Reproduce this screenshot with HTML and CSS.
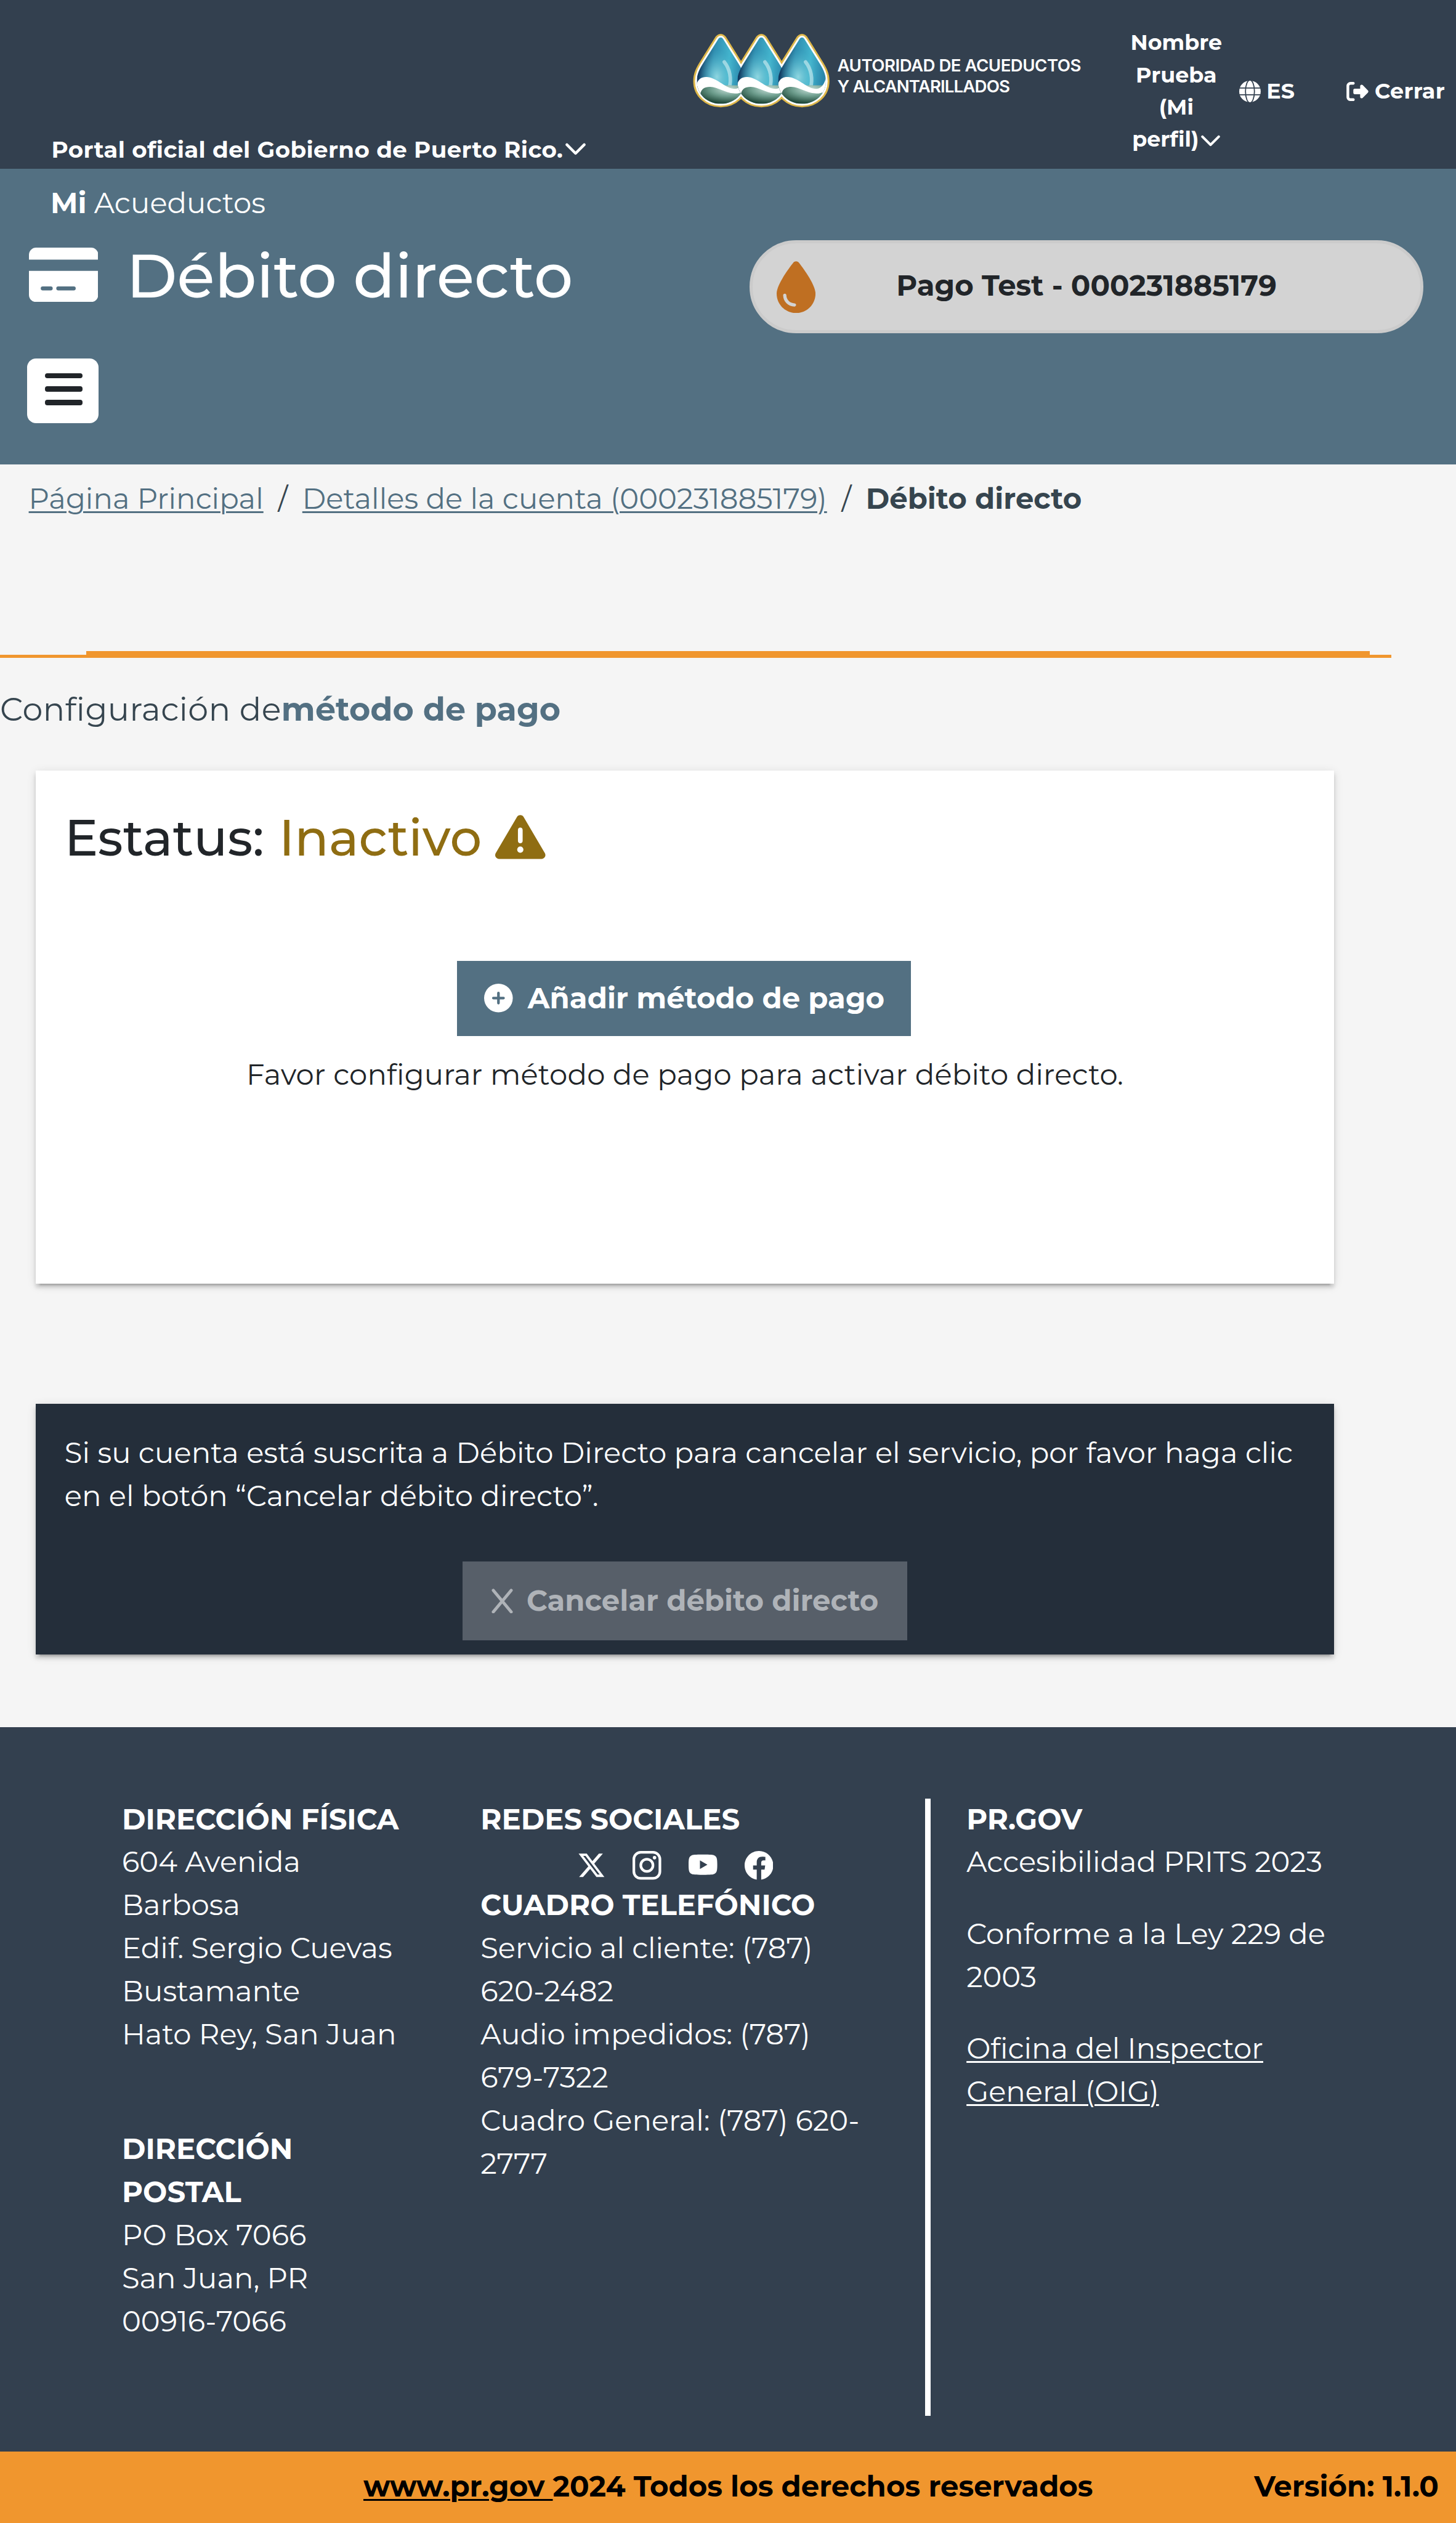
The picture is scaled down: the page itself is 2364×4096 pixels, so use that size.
FILE: index.html
```html
<!DOCTYPE html>
<html lang="es">
<head>
<meta charset="utf-8">
<title>Débito directo</title>
<link rel="stylesheet" href="styles.css">
</head>
<body>
<header class="topbar">
  <div class="portal"><span>Portal oficial del Gobierno de Puerto Rico.</span><svg class="chev" viewBox="0 0 34 21"><path d="M2.500 3 17 17.500 31.500 3"/></svg></div>
  <div class="brand">
    <svg class="drops" viewBox="0 0 227 123">
      <defs>
        <path id="drop" d="M0 6c2 0 3.500 1.500 5 4L28 47C35 58 40 67 40 79C40 101 22 117 0 117S-40 101-40 79C-40 67-35 58-28 47L-5 10C-3.500 7.500-2 6 0 6Z"/>
        <clipPath id="dropClip"><use href="#drop"/></clipPath>
        <linearGradient id="blue" x1="0" x2="1" y1=".1" y2=".25"><stop offset=".1" stop-color="#123a60"/><stop offset=".38" stop-color="#2f8db0"/><stop offset=".7" stop-color="#43b4cd"/><stop offset="1" stop-color="#2a86ab"/></linearGradient>
        <radialGradient id="glow" cx=".42" cy=".6" r=".38"><stop offset="0" stop-color="#8fd6e0"/><stop offset="1" stop-color="#4fbcd0" stop-opacity="0"/></radialGradient>
        <radialGradient id="green" cx=".66" cy=".2" r=".75"><stop offset="0" stop-color="#c5dfd8"/><stop offset=".5" stop-color="#6c9c8c"/><stop offset="1" stop-color="#1d4536"/></radialGradient>
        <g id="face" clip-path="url(#dropClip)">
          <rect x="-40" y="0" width="80" height="120" fill="url(#blue)"/>
          <rect x="-40" y="0" width="80" height="120" fill="url(#glow)"/>
          <path d="M6 47C15 58 19 75 14 92" fill="none" stroke="#d4eff2" stroke-opacity=".6" stroke-width="6" stroke-linecap="round"/>
          <path d="M-40 86H40V118H-40Z" fill="url(#green)"/>
          <path fill="#fff" d="M-41 90C-40 74-30 71-21 72.500C-4 75 8 92 24 92C33 92 38 82 40 74L41 110L34 98C30 100 26 100 22 99.500C8 99-4 89-18 88.600C-27 88.600-33 92-34 101L-41 100Z"/>
        </g>
      </defs>
      <g fill="#dfb84a" stroke="#dfb84a" stroke-width="12"><use href="#drop" x="45.500"/><use href="#drop" x="113.500"/><use href="#drop" x="181.500"/></g>
      <g fill="#fff" stroke="#fff" stroke-width="6"><use href="#drop" x="45.500"/><use href="#drop" x="113.500"/><use href="#drop" x="181.500"/></g>
      <use href="#face" x="45.500"/><use href="#face" x="113.500"/><use href="#face" x="181.500"/>
    </svg>
    <div class="brand-name">AUTORIDAD DE ACUEDUCTOS<br><span class="brand-sub">Y ALCANTARILLADOS</span></div>
  </div>
  <nav class="usernav">
    <div class="profile">Nombre<br>Prueba<br>(Mi<br>perfil)<svg class="chev" viewBox="0 0 34 21"><path d="M2.500 3 17 17.500 31.500 3"/></svg></div>
    <div class="lang"><svg class="globe" viewBox="0 0 36 36"><circle cx="18" cy="18" r="18" fill="#fff"/><g fill="none" stroke="#33404f" stroke-width="1.800"><ellipse cx="18" cy="18" rx="7.500" ry="19"/><path d="M0 12.200H36M0 23.500H36"/></g></svg>ES</div>
    <div class="logout"><svg viewBox="0 32 512 448"><path fill="#fff" d="M377.900 105.900L500.700 228.700c7.200 7.200 11.300 17.100 11.300 27.300s-4.100 20.100-11.300 27.300L377.900 406.100c-6.400 6.400-15 9.900-24 9.900c-18.700 0-33.900-15.200-33.900-33.900l0-62.100-128 0c-17.700 0-32-14.300-32-32l0-64c0-17.700 14.300-32 32-32l128 0 0-62.100c0-18.700 15.200-33.900 33.900-33.900c9 0 17.600 3.600 24 9.900zM160 96L96 96c-17.700 0-32 14.300-32 32l0 256c0 17.700 14.300 32 32 32l64 0c17.700 0 32 14.300 32 32s-14.300 32-32 32l-64 0c-53 0-96-43-96-96L0 128C0 75 43 32 96 32l64 0c17.700 0 32 14.300 32 32s-14.300 32-32 32z"/></svg>Cerrar</div>
  </nav>
</header>

<section class="band">
  <div class="band-left">
    <div class="app"><b>Mi</b> Acueductos</div>
    <div class="title-row">
      <svg class="card-icon" viewBox="0 0 116 91"><path fill="#fff" d="M12 0H104A12 12 0 0 1 116 12V20H0V12A12 12 0 0 1 12 0Z"/><path fill="#fff" fill-rule="evenodd" d="M0 39H116V79A12 12 0 0 1 104 91H12A12 12 0 0 1 0 79ZM23 65a3 3 0 0 0 0 6.500H36.500a3 3 0 0 0 0-6.500ZM49 65a3 3 0 0 0 0 6.500H75a3 3 0 0 0 0-6.500Z"/></svg>
      <h1>Débito directo</h1>
    </div>
    <button class="menu"><i></i><i></i><i></i></button>
  </div>
  <div class="account">
    <svg viewBox="0 0 384 512"><path fill="#bf6f22" d="M192 512C86 512 0 426 0 320C0 228.800 130.200 57.700 166.600 11.700C172.600 4.200 181.500 0 191.100 0h1.800c9.600 0 18.500 4.200 24.500 11.700C253.800 57.700 384 228.800 384 320c0 106-86 192-192 192zM96 336c0-8.800-7.200-16-16-16s-16 7.200-16 16c0 61.900 50.100 112 112 112c8.800 0 16-7.200 16-16s-7.200-16-16-16c-44.200 0-80-35.800-80-80z"/></svg>
    <span>Pago Test - 000231885179</span>
  </div>
</section>

<main>
  <nav class="crumbs"><a>Página Principal</a><span class="slash">/</span><a>Detalles de la cuenta (000231885179)</a><span class="slash">/</span><b>Débito directo</b></nav>
  <div class="rule"><div></div></div>
  <h2 class="config"><span>Configuración de</span><b>método de pago</b></h2>

  <section class="card status">
    <h3><span>Estatus:</span><span class="inactive">Inactivo</span><svg viewBox="0 32 512 448"><path fill="#8f6d12" d="M256 32c14.200 0 27.300 7.500 34.500 19.800l216 368c7.300 12.400 7.300 27.700 .2 40.100S486.300 480 472 480H40c-14.300 0-27.600-7.700-34.700-20.100s-7-27.800 .2-40.100l216-368C228.700 39.500 241.800 32 256 32zm0 128c-13.300 0-24 10.700-24 24V296c0 13.300 10.700 24 24 24s24-10.700 24-24V184c0-13.300-10.700-24-24-24zm32 224a32 32 0 1 0 -64 0 32 32 0 1 0 64 0z"/></svg></h3>
    <button class="btn add"><svg viewBox="0 0 48 48"><circle cx="24" cy="24" r="24" fill="#fff"/><path d="M24 15.500V32.500M15.500 24H32.500" stroke="#537082" stroke-width="4.400" stroke-linecap="round"/></svg><span>Añadir método de pago</span></button>
    <p class="hint">Favor configurar método de pago para activar débito directo.</p>
  </section>

  <section class="card cancel">
    <p>Si su cuenta está suscrita a Débito Directo para cancelar el servicio, por favor haga clic<br>en el botón “Cancelar débito directo”.</p>
    <button class="btn off"><svg viewBox="0 0 36 42"><path d="M3 3 33 39M33 3 3 39" stroke="#afb3b8" stroke-width="5" stroke-linecap="round"/></svg><span>Cancelar débito directo</span></button>
  </section>
</main>

<footer>
  <div class="col col-a">
    <b>DIRECCIÓN FÍSICA</b>
    <span>604 Avenida</span>
    <span>Barbosa</span>
    <span>Edif. Sergio Cuevas</span>
    <span>Bustamante</span>
    <span>Hato Rey, San Juan</span>
    <b class="postal">DIRECCIÓN</b>
    <b>POSTAL</b>
    <span>PO Box 7066</span>
    <span>San Juan, PR</span>
    <span>00916-7066</span>
  </div>
  <div class="col col-b">
    <b>REDES SOCIALES</b>
    <div class="social">
      <svg viewBox="0 0 512 512"><path fill="#fff" d="M389.200 48h70.600L305.600 224.200 487 464H345L233.700 318.600 106.500 464H35.800L200.700 275.500 26.800 48H172.400L272.900 180.900 389.200 48zM364.400 421.800h39.100L151.100 88h-42L364.400 421.800z"/></svg>
      <svg viewBox="0 0 48 48"><g fill="none" stroke="#fff" stroke-width="4.400"><rect x="2.200" y="2.200" width="43.600" height="43.600" rx="11.500"/><circle cx="24" cy="24" r="10.200"/></g><circle cx="36.800" cy="11.200" r="2.900" fill="#fff"/></svg>
      <svg viewBox="0 0 48 48"><path fill="#fff" fill-rule="evenodd" d="M24 6C37 6 41 6.500 43 7.500C47 9.500 48 12 48 23S47 36.500 43 38.500C41 39.500 37 40 24 40S7 39.500 5 38.500C1 36.500 0 34 0 23S1 9.500 5 7.500C7 6.500 11 6 24 6ZM19 15.800V30.200L31.500 23Z"/></svg>
      <svg viewBox="0 0 16 16"><path fill="#fff" d="M16 8.049c0-4.446-3.582-8.050-8-8.050C3.580 0-.002 3.603-.002 8.050c0 4.017 2.926 7.347 6.750 7.951v-5.625h-2.030V8.050H6.750V6.275c0-2.017 1.195-3.131 3.022-3.131.876 0 1.791.157 1.791.157v1.980h-1.009c-.993 0-1.303.621-1.303 1.258v1.510h2.218l-.354 2.326H9.250V16c3.824-.604 6.750-3.934 6.750-7.951"/></svg>
    </div>
    <b>CUADRO TELEFÓNICO</b>
    <span>Servicio al cliente: (787)</span>
    <span>620-2482</span>
    <span>Audio impedidos: (787)</span>
    <span>679-7322</span>
    <span>Cuadro General: (787) 620-</span>
    <span>2777</span>
  </div>
  <div class="divider"></div>
  <div class="col">
    <b>PR.GOV</b>
    <span>Accesibilidad PRITS 2023</span>
    <span class="gap">Conforme a la Ley 229 de</span>
    <span>2003</span>
    <a class="gap">Oficina del Inspector</a>
    <a>General (OIG)</a>
  </div>
</footer>
<div class="legal"><a>www.pr.gov&nbsp;</a><span>2024 Todos los derechos reservados</span><span class="version">Versión: 1.1.0</span></div>
</body>
</html>
```
FILE: styles.css
```css
/* 1rem is 10 layout units; the page is 243.6rem wide */
html { font-size: 9.7044px; }
* { box-sizing: border-box; }
body {
  margin: 0;
  background: #f5f5f5;
  color: #212529;
  font-family: Montserrat, Inter, sans-serif;
  font-size: 4.8rem;
  font-variant-ligatures: none;
  line-height: 7.2rem;
  white-space: nowrap;
  height: 4096px;
  overflow: hidden;
  display: flex;
  flex-direction: column;
}
svg { display: block; flex: none; }
h1, h2, h3, p { margin: 0; font-weight: 400; }
button { font: inherit; border: 0; padding: 0; margin: 0; display: flex; }
b { font-weight: 700; }

.topbar { height: 28.2rem; background: #33404f; color: #fff; display: flex; flex: none; font-weight: 700; font-size: 3.6rem; line-height: 5.4rem; }
.portal { width: 116rem; padding: 22.4rem 0 0 8.6rem; display: flex; font-size: 3.84rem; letter-spacing: .0098em; }
.chev { width: 3.4rem; height: 2.1rem; fill: none; stroke: #fff; stroke-width: 4.5; stroke-linecap: round; stroke-linejoin: round; margin: 1.5rem 0 0 .4rem; }
.brand { display: flex; padding-top: 5.7rem; width: 71rem; flex: none; }
.drops { width: 22.7rem; height: 12.3rem; overflow: visible; }
.brand-name { padding: 3.6rem 0 0 1.4rem; font-family: Inter, sans-serif; font-size: 2.85rem; line-height: 3.5rem; font-weight: 600; letter-spacing: -.019em; }
.brand-sub { letter-spacing: -.032em; }
.usernav { display: flex; align-items: flex-start; }
.profile { padding-top: 4.45rem; width: 19.6rem; text-align: center; }
.profile .chev { display: inline-block; width: 3.2rem; height: 2rem; margin: 0 0 0 .4rem; }
.lang, .logout { display: flex; align-items: center; margin-top: 12.6rem; }
.globe { width: 3.6rem; height: 3.6rem; margin: 0 1rem 0 .7rem; }
.logout { margin-left: 8.7rem; letter-spacing: .01em; }
.logout svg { width: 3.7rem; height: 3.2rem; margin-right: 1rem; }

.band { height: 49.5rem; flex: none; background: #537082; color: #fff; display: flex; }
.band-left { width: 125.4rem; padding: 2.25rem 0 0 4.5rem; }
.app { padding-left: 3.95rem; }
.title-row { display: flex; margin-top: 3.75rem; height: 9.1rem; padding-left: .3rem; }
.card-icon { width: 11.6rem; height: 9.1rem; }
h1 { font-size: 10.27rem; line-height: 9.4rem; font-weight: 500; margin-left: 4.75rem; }
.menu { flex-direction: column; align-items: center; justify-content: center; gap: 1.35rem; width: 12rem; height: 10.8rem; border-radius: 1.5rem; background: #fff; margin-top: 9.5rem; padding: 0 0 .6rem .3rem; }
.menu i { width: 6.3rem; height: .9rem; border-radius: .4rem; background: #212529; }
.account { margin-top: 12rem; width: 112.7rem; height: 15.6rem; border: .6rem solid #cbcbcb; border-radius: 7.8rem; background: #d3d3d3; color: #212529; font-weight: 700; display: flex; align-items: center; padding-left: 4rem; }
.account svg { width: 6.5rem; height: 8.7rem; margin-right: 13.55rem; }
.account span { padding-bottom: .3rem; }

main { height: 211.2rem; flex: none; }
.crumbs { display: flex; padding: 2.2rem 0 0 4.8rem; color: #36454f; height: 31.2rem; }
a { text-decoration: underline; text-decoration-thickness: .3rem; text-underline-offset: .4rem; }
.crumbs a { color: #537082; letter-spacing: .001em; }
.slash { width: 6.5rem; text-align: center; }
.rule { width: 232.8rem; border-bottom: .6rem solid #f0962e; }
.rule div { margin: 0 3.6rem 0 14.4rem; height: .6rem; background: #f0962e; }
.config { font-size: 5.4rem; line-height: 8rem; padding-top: 4.7rem; color: #36454f; display: flex; }
.config span { letter-spacing: .009em; }
.config b { color: #537082; }
.card { width: 217.2rem; margin-left: 6rem; box-shadow: 0 .9rem .3rem -.6rem rgba(0,0,0,.2), 0 .6rem .6rem rgba(0,0,0,.14), 0 .3rem 1.5rem rgba(0,0,0,.12); display: flex; flex-direction: column; align-items: center; }
.status { margin-top: 6.2rem; height: 85.8rem; background: #fff; }
h3 { align-self: stretch; display: flex; padding: 6.2rem 0 0 4.8rem; font-size: 8.4rem; line-height: 10rem; font-weight: 500; }
.inactive { color: #8f6d12; margin-left: 2.5rem; }
h3 svg { width: 8.4rem; height: 7.4rem; margin: 1.2rem 0 0 2.25rem; }
.btn { align-items: center; font-weight: 700; color: #fff; }
.add { width: 75.9rem; height: 12.6rem; margin: 15.6rem .3rem 0 0; background: #537082; padding-left: 4.5rem; }
.add svg { width: 4.8rem; height: 4.8rem; margin-right: 2.5rem; }
.hint { margin-top: 2.9rem; letter-spacing: .0033em; }
.cancel { margin-top: 20.1rem; height: 42rem; background: #242e3a; color: #fff; }
.cancel p { align-self: stretch; padding: 4.7rem 0 0 4.8rem; letter-spacing: .0015em; }
.off { width: 74.4rem; height: 13.2rem; margin-top: 7.3rem; background: #575f69; color: #afb3b8; padding-left: 4.8rem; }
.off svg { width: 3.6rem; height: 4.2rem; margin-right: 2.3rem; }

footer { height: 121.2rem; flex: none; background: #33404f; color: #fff; display: flex; padding: 11.85rem 0 0 20.4rem; }
.col { display: flex; flex-direction: column; align-items: flex-start; }
.col-a { width: 60rem; }
.col-b { width: 74.4rem; }
.postal { margin-top: 12rem; }
.social { height: 7.2rem; display: flex; gap: 4.53rem; padding: 1.75rem 0 0 16.15rem; }
.social svg { width: 4.8rem; height: 4.8rem; }
.divider { width: .9rem; height: 103.2rem; background: #fff; margin: .15rem 6rem 0 0; }
.gap { margin-top: 4.8rem; }
.legal { flex: 1; background: #f0962e; color: #000; font-weight: 700; display: flex; padding: 2.25rem 0 0 60.8rem; }
.version { margin-left: auto; padding-right: 2.9rem; }
```
